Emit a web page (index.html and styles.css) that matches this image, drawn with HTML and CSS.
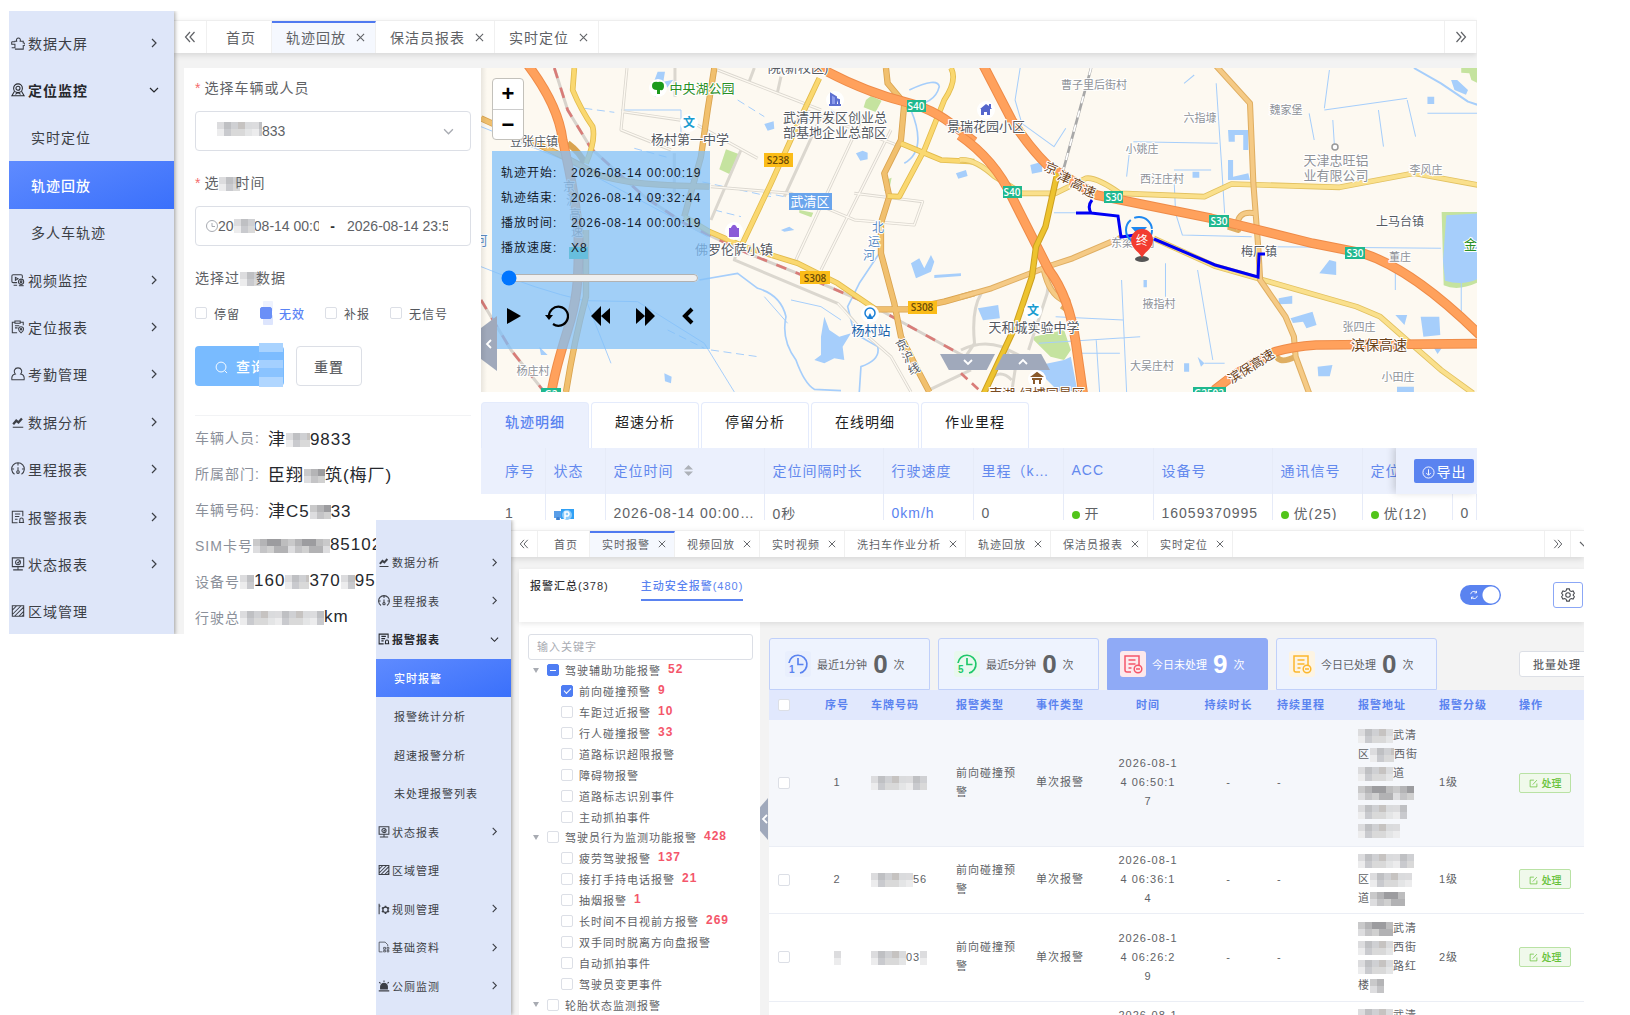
FILE: index.html
```html
<!DOCTYPE html>
<html lang="zh-CN">
<head>
<meta charset="utf-8">
<meta name="viewport" content="width=device-width, initial-scale=1">
<title>车辆监控平台</title>
<link rel="stylesheet" href="styles.css">
</head>
<body>
<svg class="sprite" aria-hidden="true">
  <symbol id="i-right" viewBox="0 0 10 10"><path d="M3 1l4 4-4 4" fill="none" stroke="currentColor" stroke-width="1.2"/></symbol>
  <symbol id="i-left" viewBox="0 0 10 10"><path d="M7 1L3 5l4 4" fill="none" stroke="currentColor" stroke-width="1.8"/></symbol>
  <symbol id="i-down" viewBox="0 0 10 10"><path d="M1 3l4 4 4-4" fill="none" stroke="currentColor" stroke-width="1.2"/></symbol>
  <symbol id="i-close" viewBox="0 0 10 10"><path d="M1 1l8 8M9 1L1 9" fill="none" stroke="currentColor" stroke-width="1.2"/></symbol>
  <symbol id="i-prev" viewBox="0 0 12 12"><path d="M6 1L1.500 6 6 11M10.500 1L6 6l4.500 5" fill="none" stroke="currentColor" stroke-width="1.200"/></symbol>
  <symbol id="i-next" viewBox="0 0 12 12"><path d="M6 1l4.500 5L6 11M1.500 1L6 6l-4.500 5" fill="none" stroke="currentColor" stroke-width="1.200"/></symbol>
  <symbol id="i-screen" viewBox="0 0 16 16"><path d="M.8 6.500h4M.8 6.500v3h3.700v4H.8M4.500 15h9.500v-4c3 .5 3-3.500 0-3V6h-3.500c1.500-5-5.500-5-4 0H4" fill="none" stroke="currentColor" stroke-width="1.200"/></symbol>
  <symbol id="i-locate" viewBox="0 0 16 16"><circle cx="8" cy="6" r="5"/><circle cx="8" cy="6" r="2.300"/><path d="M4 9.500L1 14.500h14L12 9.500M5 13l3-2 3 2"/></symbol>
  <symbol id="i-video" viewBox="0 0 16 16"><path d="M7 11H2.500A1.500 1.500 0 0 1 1 9.500v-6A1.500 1.500 0 0 1 2.500 2h9A1.500 1.500 0 0 1 13 3.500V6M3 14h4M5 5v3.500L8 6.700z"/><circle cx="11.500" cy="10" r="3"/><circle cx="11.500" cy="10" r="1"/><path d="M9 14.500h5.500"/></symbol>
  <symbol id="i-clip" viewBox="0 0 16 16"><path d="M7 14.500H1.500V2.500h3M10.500 2.500H14V6M4.500 1.200h6v2.600h-6zM4.500 6.500h5M4.500 9h3M11.500 14.800c-4-3-3.500-7 0-7s4 4 0 7z"/><circle cx="11.500" cy="10.500" r=".8"/></symbol>
  <symbol id="i-person" viewBox="0 0 16 16"><path d="M5 8C2.500 5 4 1 8 1s5.500 4 3 7c3.500.5 4.500 2.500 4 6.500H1C.5 10.500 1.500 8.500 5 8z"/></symbol>
  <symbol id="i-chart" viewBox="0 0 16 16"><path d="M2 14h12"/><path d="M2.500 10.500L6 6.500l2.500 2 4-4.500" stroke-width="2.600"/></symbol>
  <symbol id="i-gauge" viewBox="0 0 16 16"><path d="M4 14a7.200 7.200 0 1 1 8 0M8 1v3M1.500 8h2M14.500 8h-2M8 6v4"/><circle cx="8" cy="11.500" r="1.500"/></symbol>
  <symbol id="i-alarm" viewBox="0 0 16 16"><path d="M7.500 14.500H1.500v-13h12V7M4.500 4.500h6M4.500 7.500h5M4.500 10.500h3M10 14v-2.500c0-3 4-3 4 0V14M9 14.300h6"/></symbol>
  <symbol id="i-state" viewBox="0 0 16 16"><path d="M1.500 1h13v10h-13zM8 11v3.500M2.500 14.700h11"/><circle cx="8" cy="6" r="2.800"/><path d="M7 6l1 1 2-2.500"/></symbol>
  <symbol id="i-region" viewBox="0 0 16 16"><path d="M1.500 2h13v12h-13zM1.500 7l5-5M1.500 12l10-10M4 14L14.500 3.500M9 14l5.500-5.500M12.500 14l2-2"/></symbol>
  <symbol id="i-rule" viewBox="0 0 16 16"><path d="M1.500 1v14M1.500 4h1.800"/><circle cx="10" cy="9" r="3.500" stroke-width="1.800"/><path d="M10 3.500v2M10 12.500v2M5.200 6.200l1.800 1M13 10.800l1.800 1M5.200 11.800l1.800-1M13 7.200l1.800-1" stroke-width="2.200"/></symbol>
  <symbol id="i-base" viewBox="0 0 16 16"><path d="M6 14.500H1.500v-13h8L13 5v2M7.500 8.500h2.500V11H7.500zM12 8.500h2.500V11H12zM7.500 12.500h2.500v2H7.500zM12 12.500h2.500v2H12z" stroke-width="1"/></symbol>
  <symbol id="i-siren" viewBox="0 0 16 16"><path d="M3.500 12V9c0-6 9-6 9 0v3z" fill="currentColor"/><path d="M1 14.500h14M8 .5v2M1.500 3l2 1.500M14.500 3l-2 1.500"/></symbol>
  <symbol id="i-edit" viewBox="0 0 12 12"><path d="M6.500 1.500H1.500v9h9V6M5 7.500L10.500 1.500" fill="none" stroke="currentColor"/></symbol>
  <symbol id="i-list" viewBox="0 0 26 26"><path d="M11 21H7a2 2 0 0 1-2-2V5h14v9M8.500 9h7M8.500 13h7M8.500 17h3" fill="none" stroke="currentColor" stroke-width="1.500"/><circle cx="18" cy="18" r="3.800" fill="none" stroke="currentColor" stroke-width="1.500"/><path d="M16 18h4" stroke="currentColor" stroke-width="1.300"/></symbol>
  <symbol id="i-clock" viewBox="0 0 26 26"><path d="M4 12a9 9 0 1 1 11 10" fill="none" stroke="currentColor" stroke-width="1.700"/><path d="M13 7v6.500h5.500" fill="none" stroke="currentColor" stroke-width="1.700"/></symbol>
</svg>

<main class="desktop">
  <section class="window window-track">
    <nav class="sidebar" aria-label="主菜单">
      <a href="#"><svg class="ico"><use href="#i-screen"/></svg>数据大屏<svg class="arrow"><use href="#i-right"/></svg></a>
      <a href="#" class="open"><svg class="ico"><use href="#i-locate"/></svg>定位监控<svg class="arrow"><use href="#i-down"/></svg></a>
      <a href="#" class="sub">实时定位</a>
      <a href="#" class="sub active">轨迹回放</a>
      <a href="#" class="sub">多人车轨迹</a>
      <a href="#"><svg class="ico"><use href="#i-video"/></svg>视频监控<svg class="arrow"><use href="#i-right"/></svg></a>
      <a href="#"><svg class="ico"><use href="#i-clip"/></svg>定位报表<svg class="arrow"><use href="#i-right"/></svg></a>
      <a href="#"><svg class="ico"><use href="#i-person"/></svg>考勤管理<svg class="arrow"><use href="#i-right"/></svg></a>
      <a href="#"><svg class="ico"><use href="#i-chart"/></svg>数据分析<svg class="arrow"><use href="#i-right"/></svg></a>
      <a href="#"><svg class="ico"><use href="#i-gauge"/></svg>里程报表<svg class="arrow"><use href="#i-right"/></svg></a>
      <a href="#"><svg class="ico"><use href="#i-alarm"/></svg>报警报表<svg class="arrow"><use href="#i-right"/></svg></a>
      <a href="#"><svg class="ico"><use href="#i-state"/></svg>状态报表<svg class="arrow"><use href="#i-right"/></svg></a>
      <a href="#"><svg class="ico"><use href="#i-region"/></svg>区域管理</a>
    </nav>
    <div class="content">
      <header class="tabbar">
        <button class="nav-btn" aria-label="向左"><svg><use href="#i-prev"/></svg></button>
        <a href="#" class="tab home">首页</a>
        <a href="#" class="tab active">轨迹回放<svg><use href="#i-close"/></svg></a>
        <a href="#" class="tab">保洁员报表<svg><use href="#i-close"/></svg></a>
        <a href="#" class="tab">实时定位<svg><use href="#i-close"/></svg></a>
        <button class="nav-btn last" aria-label="向右"><svg><use href="#i-next"/></svg></button>
      </header>
      <div class="track-body">
        <form class="query">
          <label class="field-label required" for="vehicle">选择车辆或人员</label>
          <div class="box">
            <select id="vehicle"><option>833</option></select>
            <i class="mosaic m-select"></i>
            <svg class="caret"><use href="#i-down"/></svg>
          </div>
          <label class="field-label required" for="from">选<i class="mosaic m-char"></i>时间</label>
          <div class="box range">
            <svg class="clock" viewBox="0 0 12 12"><circle cx="6" cy="6" r="5.500"/><path d="M6 3v3.500h3"/></svg>
            <input id="from" type="text" value="2026-08-14 00:00:00">
            <i class="mosaic m-date"></i>
            <span>-</span>
            <input type="text" aria-label="结束时间" value="2026-08-14 23:5">
          </div>
          <div class="field-label">选择过<i class="mosaic m-char"></i>数据</div>
          <div class="checks">
            <label><input type="checkbox">停留</label>
            <label class="on"><input type="checkbox" checked>无效</label>
            <label><input type="checkbox">补报</label>
            <label><input type="checkbox">无信号</label>
          </div>
          <div class="actions">
            <button type="button" class="primary"><svg viewBox="0 0 14 14"><circle cx="6.500" cy="6.500" r="5.300"/><path d="M10.500 10.500l2.500 2.500"/></svg>查询<i class="mosaic m-blue"></i></button>
            <button type="button" class="plain">重置</button>
          </div>
          <dl class="info">
            <div><dt>车辆人员:</dt><dd>津<i class="mosaic w24"></i>9833</dd></div>
            <div><dt>所属部门:</dt><dd>臣翔<i class="mosaic w21 dark"></i>筑(梅厂)</dd></div>
            <div><dt>车辆号码:</dt><dd>津C5<i class="mosaic w21 dark"></i>33</dd></div>
            <div><dt>SIM卡号</dt><dd><i class="mosaic w77 dark"></i>85102</dd></div>
            <div><dt>设备号</dt><dd><i class="mosaic w14"></i>160<i class="mosaic w24"></i>370<i class="mosaic w14"></i>95</dd></div>
            <div><dt>行驶总</dt><dd><i class="mosaic w84"></i>km</dd></div>
          </dl>
        </form>

        <div class="track-main">
          <div class="map">
            <svg class="map-art" viewBox="480 68 997 324" preserveAspectRatio="xMinYMin slice" role="img" aria-label="武清区地图">
              <rect x="480" y="68" width="1600" height="324" fill="#fdf9f1"/>
              <g transform="translate(470 50) scale(.3333)" fill="none" stroke-linejoin="round">
                <g fill="#a6cefb">
                  <path d="M545 105l15-40 22 0-5 30 30-6-20 26-35 26zM880 222l28-8 2 22-20 6zM1155 310l20-8 15 6v20l-22 4zM1050 860l10-60 15 40 30 20 35-10-25 40 5 40-30-5-30 15-30-10 20-15zM205 890l25 25-20 0zM580 970l22 10-2 20-18-6zM1455 370l30-10 5 18-28 8zM1320 640l25-15 15 30 20-40 10 20-10 30-45 20zM930 540l25-10 15 10-30 5zM1390 675l80-5v8l-80 6z"/>
                </g>
                <g fill="#c5e39f"><path d="M1185 150l15-12 32 14-18 34-36-14zM765 298l38 14-28 60-30-14zM985 480l42 8-6 14-36-14zM1250 388l12-5-8 40-14 0z"/></g>
                <g stroke="#a6cefb" stroke-width="5">
                  <path d="M685 690L800 670 860 715Q930 735 945 800Q930 870 975 930Q1000 1000 1030 1018L1110 1022"/>
                  <path d="M1225 610L1165 700 1130 770 1150 850 1220 890Q1230 930 1170 950L1165 1026M1315 120Q1400 80 1405 110Q1390 170 1300 165M1320 180Q1370 300 1300 340"/>
                  <path d="M30 230L280 330 600 500 710 560M30 650Q200 720 340 752L500 755 700 880 790 1026M345 750L420 940M450 180h180v110M880 740l70 80M960 750l90 20 60 40" stroke-width="3"/>
                  <path d="M340 175l90 12M490 295l110 30M840 420l100 20M620 380l280 60M730 480l80 20M590 840l110 55M720 900l140 20M800 150l80 50M970 190l70 30M1080 180l30 20" stroke-width="3" stroke-dasharray="24 14"/>
                </g>
                <g stroke="#dbd7cf" stroke-width="9">
                  <path d="M468 54L450 240L600 300M455 185L660 215 860 325M612 54V140M610 310V430M740 60L1050 180M850 54l-15 40M930 80l-10 45M1000 180L1290 290M1180 190L970 640M1260 240L1050 660M810 300L720 510M720 410L960 430L1150 510 1330 525 1355 455 1150 430M800 600L790 630L1100 760L1120 780 1180 850 1260 920 1320 1026M1050 200L940 440M1375 1020L1500 960"/>
                </g>
                <g stroke="#fdf9f1" stroke-width="4">
                  <path d="M468 54L450 240L600 300M455 185L660 215 860 325M740 60L1050 180M1000 180L1290 290M1180 190L970 640M1260 240L1050 660M720 410L960 430L1150 510 1330 525 1355 455 1150 430M1100 760L1180 850 1260 920 1320 1026"/>
                </g>
                <g stroke="#d8d3cc" stroke-width="9"><path d="M250 54L290 180 360 295 520 440 640 520 830 610 980 670 1190 760 1500 930M30 750L120 900 220 1026"/></g>
                <path d="M250 54L290 180 360 295 520 440 640 520 830 610 980 670 1190 760 1500 930M30 750L120 900 220 1026" stroke="#d97c78" stroke-width="8" stroke-dasharray="32 30"/>
                <g stroke="#d9a34f" stroke-width="19">
                  <path d="M30 205C150 260 280 315 370 370C450 400 540 405 715 410M730 54L710 180 690 320 640 500M345 540L345 740Q310 870 285 1026M1245 54L1250 100 1300 160 1290 270 1240 370 1255 440 1230 520 1230 610 1270 760 1290 860 1340 960 1375 1026M1210 778L1310 778 1420 755 1510 730M290 280Q330 310 340 340"/>
                </g>
                <g stroke="#f1c06e" stroke-width="14">
                  <path d="M30 205C150 260 280 315 370 370C450 400 540 405 715 410M730 54L710 180 690 320 640 500M345 540L345 740Q310 870 285 1026M1245 54L1250 100 1300 160 1290 270 1240 370 1255 440 1230 520 1230 610 1270 760 1290 860 1340 960 1375 1026M1210 778L1310 778 1420 755 1510 730"/>
                </g>
                <g stroke="#e2bb4c" stroke-width="17">
                  <path d="M310 54L305 120Q330 180 365 230Q375 270 345 340M640 500L715 545 820 590 980 640 1100 700 1210 775M1045 85L1000 180 900 400 810 590M1440 54Q1460 90 1420 150L1360 300 1285 440 1250 438M1290 280L1410 330 1510 335"/>
                </g>
                <g stroke="#fad870" stroke-width="12">
                  <path d="M310 54L305 120Q330 180 365 230Q375 270 345 340M640 500L715 545 820 590 980 640 1100 700 1210 775M1045 85L1000 180 900 400 810 590M1440 54Q1460 90 1420 150L1360 300 1285 440 1250 438M1290 280L1410 330 1510 335"/>
                </g>
                <path d="M170 44C220 110 265 190 275 270C300 380 320 480 322 560C325 700 315 760 290 840C265 920 245 1000 240 1036M1030 44C1120 95 1200 130 1300 155C1400 180 1440 220 1510 275" stroke="#ee8b48" stroke-width="29"/>
                <path d="M170 44C220 110 265 190 275 270C300 380 320 480 322 560C325 700 315 760 290 840C265 920 245 1000 240 1036M1030 44C1120 95 1200 130 1300 155C1400 180 1440 220 1510 275" stroke="#ffa15c" stroke-width="23"/>
              </g>
              <g transform="translate(960 50) scale(.338 .3333)" fill="none" stroke-linejoin="round">
                <path d="M1422 486h110v210q-60 30-104 10zM1480 54h50v46l-20-10-6-20-24-2zM215 860l90-20 20 60-20 30-40-10-50-50z" fill="#c5e39f"/>
                <g fill="#a6cefb">
                  <path d="M1436 496l94-6v196q-45 22-98 6l-6-60zM235 945l70-15 20-10 20 106H290L225 960zM790 240h60v60h-15v-45h-25v20h-18zM790 330h15v50l45-10 5 20h-65zM205 345l35-10v30l-30 6zM1450 90l18 0 32 30-6 14-34-14zM1380 140h20v22h-20zM1360 800h55l3 55-50 5zM1385 870l50 6-25 36zM1285 795h35l-8 30zM975 805l65-20 12 40-30 10-10-20-30 4zM1090 630l20 5 0 40-50-5zM940 745l40-8v24l-40 2zM1055 950l44-5-8 34-34 0zM1290 1010h50v16h-50zM685 365h20v18h-20zM50 775l60-10 5 40-50 6zM540 690h10v22h-10zM660 940h15v25h-15zM700 920l20 20-10 10z"/>
                </g>
                <g stroke="#a6cefb" stroke-width="3">
                  <path d="M1340 54L1420 100 1500 155 1530 165" stroke-width="6"/>
                  <path d="M175 54L160 150 180 220 275 290 310 235M510 275L760 280M500 290L490 380M755 100L770 330 780 490M630 380L635 490 655 555 860 560M920 590L1420 595M275 488H340M1100 210L1105 290M1075 180L1320 145M1320 150L1345 260M1235 180L1250 290M1030 190L1045 270M605 640V740M700 660L745 930M475 690L490 1026M280 800L480 810M230 880L530 860M660 100L690 75M1090 60L1075 175M1285 600V720M1480 650V790M630 360h110M350 910h120M400 870L410 1026M720 940h60M1380 190h150"/>
                </g>
                <g stroke="#dbd7cf" stroke-width="9"><path d="M0 900Q60 870 120 890L200 930M60 730Q30 780 40 880L0 940M265 660L255 730 200 900M130 890L160 960 150 1026M80 1000Q110 950 150 990"/></g>
                <path d="M385 54L300 370 260 440" stroke="#a8a8a8" stroke-width="8"/>
                <path d="M385 54L300 370" stroke="#fff" stroke-width="5" stroke-dasharray="22 22"/>
                <path d="M0 970L60 1026" stroke="#d97c78" stroke-width="8" stroke-dasharray="26 18"/>
                <path d="M-4 330Q40 325 100 380L180 430 280 430 370 385Q400 380 470 430L720 440 800 402 1120 412 1340 370 1535 406M570 565L750 648 880 686 1170 770 1240 800 1330 880 1420 960 1515 1030" stroke="#e2c160" stroke-width="17"/>
                <path d="M-4 330Q40 325 100 380L180 430 280 430 370 385Q400 380 470 430L720 440 800 402 1120 412 1340 370 1535 406M570 565L750 648 880 686 1170 770 1240 800 1330 880 1420 960 1515 1030" stroke="#fae08c" stroke-width="12"/>
                <path d="M-4 742L90 715 270 645 330 625 480 560M755 48L855 160 865 400 880 600 885 690 960 800 985 860 990 920 1030 1030M870 490Q810 480 820 540L790 530M245 660Q260 730 300 750Q330 740 300 780M990 920Q930 950 930 900" stroke="#dfae62" stroke-width="18"/>
                <path d="M-4 742L90 715 270 645 330 625 480 560M755 48L855 160 865 400 880 600 885 690 960 800 985 860 990 920 1030 1030M870 490Q810 480 820 540M245 660Q260 730 300 750" stroke="#f5ca85" stroke-width="12"/>
                <path d="M65 44L150 210Q200 290 260 350L400 435 740 505 1040 580 1190 610Q1340 660 1535 855M-4 256Q100 330 150 440L260 660Q320 740 340 880L362 1036M1535 881L1050 885Q980 890 930 905Q820 960 750 1020" stroke="#ee8b48" stroke-width="29"/>
                <path d="M65 44L150 210Q200 290 260 350L400 435 740 505 1040 580 1190 610Q1340 660 1535 855M-4 256Q100 330 150 440L260 660Q320 740 340 880L362 1036M1535 881L1050 885Q980 890 930 905Q820 960 750 1020" stroke="#ffa15c" stroke-width="23"/>
                <path d="M285 370L250 530 222 590 210 680 160 830 65 1036" stroke="#cda021" stroke-width="19"/>
                <path d="M285 370L250 530 222 590 210 680 160 830 65 1036" stroke="#edc32f" stroke-width="13"/>
              </g>
              <g class="lbl" text-anchor="middle">
                <g class="poi">
                  <circle cx="657" cy="88" r="9"/><circle cx="688" cy="123" r="9"/><circle cx="834" cy="100" r="9"/><circle cx="733" cy="231" r="9"/><circle cx="869" cy="314" r="9"/><circle cx="985" cy="110" r="9"/><circle cx="1032" cy="311" r="9"/><circle cx="1036" cy="379" r="9"/>
                </g>
                <path d="M651 86q0-5 6-4 6-1 6 4t-4 4l0 4h-3v-4q-5 0-5-4z" fill="#1c9a1c"/>
                <text x="688" y="127" class="school">文</text><text x="1032" y="315" class="school">文</text>
                <path d="M830 105V94l5 3v8M835 99l3 1v5M828 105h12" stroke="#5d6fd0" stroke-width="2" fill="#8c9bea"/>
                <path d="M728 228h10v9h-10zM730.500 228q2.500-6 5 0" fill="#8a5bd8"/><path d="M730.500 228q2.500-5 5 0" fill="none" stroke="#8a5bd8" stroke-width="1.500"/>
                <path d="M979 109l6-5 3 2v-2h2v4l1 1h-2v6h-3v-3h-3v3h-3v-6z" fill="#5566cc"/>
                <circle cx="869" cy="313" r="5" fill="none" stroke="#1a7fd6" stroke-width="1.500"/><path d="M866 319l3-6 3 6z" fill="#1a7fd6"/>
                <path d="M1031 379h10M1032 376l4-3 4 3zM1033 379v5M1039 379v5" stroke="#8a5a2b" stroke-width="2"/>
                <circle cx="1334" cy="147" r="3" fill="#fff" stroke="#999" stroke-width="1.500"/>
                <g class="t13">
                  <text x="701" y="93" class="green">中央湖公园</text>
                  <text x="689" y="144">杨村第一中学</text>
                  <text x="797" y="72">院(新校区)</text>
                  <text x="834" y="122">武清开发区创业总</text><text x="834" y="137">部基地企业总部区</text>
                  <text x="985" y="131">景瑞花园小区</text>
                  <text x="733" y="254">佛罗伦萨小镇</text>
                  <text x="1033" y="332">天和城实验中学</text>
                  <text x="870" y="335" class="blue">杨村站</text>
                  <text x="1335" y="165" class="gray">天津忠旺铝</text><text x="1335" y="180" class="gray">业有限公司</text>
                  <text x="1036" y="398" class="brown">南湖·绿博园景区</text>
                  <text x="1476" y="249" class="green">金泉</text>
                  <text x="480" y="245" class="blue2">河</text>
                </g>
                <g class="t12">
                  <text x="533" y="146">豆张庄镇</text><text x="1399" y="226">上马台镇</text><text x="1258" y="256">梅厂镇</text>
                  <text x="877" y="232" class="blue2">北</text><text x="873" y="246" class="blue2">运</text><text x="868" y="260" class="blue2">河</text>
                  <text x="568" y="191" opacity=".6">京</text><text x="571" y="205" opacity=".6">沪</text><text x="574" y="219" opacity=".6">高</text><text x="576" y="236" opacity=".6">速</text>
                  <text x="901" y="349" transform="rotate(-25 901 345)">京</text><text x="907" y="361" transform="rotate(-25 907 357)">沪</text><text x="913" y="373" transform="rotate(-25 913 369)">线</text>
                </g>
                <g class="t11 gray">
                  <text x="532" y="375">杨庄村</text><text x="1093" y="89">曹子里后街村</text><text x="1199" y="122">六指𡐓</text><text x="1285" y="114">魏家堡</text>
                  <text x="1141" y="153">小姚庄</text><text x="1161" y="183">西汪庄村</text><text x="1425" y="174">李风庄</text><text x="1399" y="261">董庄</text>
                  <text x="1132" y="247">东梁各村</text><text x="1158" y="308">掖指村</text><text x="1358" y="331">张四庄</text><text x="1151" y="370">大吴庄村</text><text x="1397" y="381">小田庄</text>
                </g>
                <g class="road">
                  <text x="1050" y="173" transform="rotate(22 1050 169)">京</text><text x="1063" y="182" transform="rotate(25 1063 178)">津</text><text x="1076" y="189" transform="rotate(26 1076 185)">高</text><text x="1088" y="196" transform="rotate(20 1088 192)">速</text>
                  <text x="1378" y="350" class="wide">滨保高速</text>
                  <text x="1250" y="371" transform="rotate(-32 1250 366)">滨保高速</text>
                </g>
                <g class="badges">
                  <rect x="763" y="153" width="29" height="14" class="yel"/><text x="777" y="164" class="dark">S238</text>
                  <rect x="799" y="271" width="30" height="13" class="yel"/><text x="814" y="282" class="dark">S308</text>
                  <rect x="907" y="301" width="29" height="13" class="yel"/><text x="921" y="311" class="dark">S308</text>
                  <rect x="906" y="100" width="19" height="12"/><text x="915" y="110">S40</text>
                  <rect x="1002" y="186" width="19" height="12"/><text x="1011" y="196">S40</text>
                  <rect x="1103" y="191" width="19" height="12"/><text x="1113" y="201">S30</text>
                  <rect x="1208" y="215" width="20" height="12"/><text x="1218" y="225">S30</text>
                  <rect x="1344" y="247" width="20" height="12"/><text x="1354" y="257">S30</text>
                  <rect x="540" y="388" width="20" height="12"/><text x="550" y="398">G2</text>
                  <rect x="1192" y="387" width="33" height="12"/><text x="1208" y="397">G2502</text>
                  <rect x="568" y="247" width="19" height="12"/>
                  <rect x="788" y="193" width="43" height="17" class="area"/><text x="809" y="206" class="district">武清区</text>
                </g>
              </g>
              <path d="M1075 213h15l27 3 3 21 14-2M1091 200q-5 6-1 13M1153 239l61 26 43 12 1-23h6" fill="none" stroke="#0000f5" stroke-width="3"/>
              <circle cx="1138" cy="230" r="13" fill="none" stroke="#1e88f0" stroke-width="2" stroke-dasharray="24 4"/>
              <path d="M1130 227h16l-8 9z" fill="#1e88f0"/>
              <ellipse cx="1141" cy="259" rx="7" ry="3" fill="#555"/>
              <path d="M1141 258c-2-6-11-9-11-18a11 11 0 0 1 22 0c0 9-9 12-11 18z" fill="#f23c30"/>
              <text x="1141" y="245" text-anchor="middle" fill="#fff" font-size="12">终</text>
            </svg>
            <div class="zoom"><button aria-label="放大">+</button><button aria-label="缩小">−</button></div>
            <div class="player">
              <dl>
                <div><dt>轨迹开始:</dt><dd>2026-08-14 00:00:19</dd></div>
                <div><dt>轨迹结束:</dt><dd>2026-08-14 09:32:44</dd></div>
                <div><dt>播放时间:</dt><dd>2026-08-14 00:00:19</dd></div>
                <div><dt>播放速度:</dt><dd>X8</dd></div>
              </dl>
              <input type="range" min="0" max="100" value="0" aria-label="播放进度">
              <div class="player-btns">
                <button aria-label="播放"><svg viewBox="0 0 24 24"><path d="M6 4l14 8-14 8z"/></svg></button>
                <button aria-label="重播"><svg viewBox="0 0 24 24"><path d="M4 13a9.500 9.500 0 1 1 4 7" fill="none" stroke="#000" stroke-width="2.200"/><path d="M0 11h8l-4 5z"/></svg></button>
                <button aria-label="后退"><svg viewBox="0 0 24 24"><path d="M12 2v20L2 12zM21 4v16l-9-8z"/></svg></button>
                <button aria-label="前进"><svg viewBox="0 0 24 24"><path d="M12 2v20l10-10zM3 4v16l9-8z"/></svg></button>
                <button aria-label="收起"><svg viewBox="0 0 24 24"><path d="M15 5l-7 7 7 7" fill="none" stroke="#000" stroke-width="4"/></svg></button>
              </div>
            </div>
            <button class="fold" aria-label="收起面板"><svg><use href="#i-left"/></svg></button>
            <div class="fold-v">
              <button aria-label="向下"><svg viewBox="0 0 10 10"><path d="M1 3l4 4 4-4"/></svg></button><button aria-label="向上"><svg viewBox="0 0 10 10"><path d="M1 7l4-4 4 4"/></svg></button>
            </div>
          </div>
          <div class="detail-tabs">
            <button class="active">轨迹明细</button><button>超速分析</button><button>停留分析</button><button>在线明细</button><button>作业里程</button>
          </div>
          <div class="detail">
            <table>
              <colgroup><col class="c1"><col class="c2"><col class="c3"><col class="c4"><col class="c5"><col class="c5"><col class="c5"><col class="c4"><col class="c5"><col class="c5"><col></colgroup>
              <thead><tr><th>序号</th><th>状态</th><th>定位时间<svg class="sort" viewBox="0 0 10 12"><path d="M0 5l5-5 5 5zM0 7l5 5 5-5z"/></svg></th><th>定位间隔时长</th><th>行驶速度</th><th>里程（k…</th><th>ACC</th><th>设备号</th><th>通讯信号</th><th>定位信号</th><th></th></tr></thead>
              <tbody><tr><td>1</td><td><svg class="truck" viewBox="0 0 20 12"><path d="M0 2h7v7H0z" fill="#5a9ee8"/><path d="M7 0h13v10H7z" fill="#2fa0f5"/><circle cx="13" cy="6" r="5" fill="#8dcbfa"/><circle cx="4" cy="10" r="2" fill="#3c7fd0"/><path d="M11 10V3h3q2 2 0 4h-3" fill="none" stroke="#fff" stroke-width="1.500"/></svg></td><td>2026-08-14 00:00…</td><td>0秒</td><td class="link">0km/h</td><td>0</td><td><i class="dot"></i>开</td><td>16059370995</td><td><i class="dot"></i>优(25)</td><td><i class="dot"></i>优(12)</td><td>0</td></tr></tbody>
            </table>
            <div class="export"><button><svg viewBox="0 0 14 14"><circle cx="7" cy="7" r="6"/><path d="M7 3.500v6M4.500 7.500L7 10l2.500-2.500"/></svg>导出</button></div>
          </div>
        </div>
      </div>
    </div>
  </section>

  <section class="window window-alarm">
    <nav class="sidebar" aria-label="报警菜单">
      <a href="#"><svg class="ico"><use href="#i-chart"/></svg>数据分析<svg class="arrow"><use href="#i-right"/></svg></a>
      <a href="#"><svg class="ico"><use href="#i-gauge"/></svg>里程报表<svg class="arrow"><use href="#i-right"/></svg></a>
      <a href="#" class="open"><svg class="ico"><use href="#i-alarm"/></svg>报警报表<svg class="arrow"><use href="#i-down"/></svg></a>
      <a href="#" class="sub active">实时报警</a>
      <a href="#" class="sub">报警统计分析</a>
      <a href="#" class="sub">超速报警分析</a>
      <a href="#" class="sub">未处理报警列表</a>
      <a href="#"><svg class="ico"><use href="#i-state"/></svg>状态报表<svg class="arrow"><use href="#i-right"/></svg></a>
      <a href="#"><svg class="ico"><use href="#i-region"/></svg>区域管理</a>
      <a href="#"><svg class="ico"><use href="#i-rule"/></svg>规则管理<svg class="arrow"><use href="#i-right"/></svg></a>
      <a href="#"><svg class="ico"><use href="#i-base"/></svg>基础资料<svg class="arrow"><use href="#i-right"/></svg></a>
      <a href="#"><svg class="ico"><use href="#i-siren"/></svg>公厕监测<svg class="arrow"><use href="#i-right"/></svg></a>
    </nav>
    <div class="content">
      <header class="tabbar">
        <button class="nav-btn" aria-label="向左"><svg><use href="#i-prev"/></svg></button>
        <a href="#" class="tab home">首页</a>
        <a href="#" class="tab active">实时报警<svg><use href="#i-close"/></svg></a>
        <a href="#" class="tab">视频回放<svg><use href="#i-close"/></svg></a>
        <a href="#" class="tab">实时视频<svg><use href="#i-close"/></svg></a>
        <a href="#" class="tab">洗扫车作业分析<svg><use href="#i-close"/></svg></a>
        <a href="#" class="tab">轨迹回放<svg><use href="#i-close"/></svg></a>
        <a href="#" class="tab">保洁员报表<svg><use href="#i-close"/></svg></a>
        <a href="#" class="tab">实时定位<svg><use href="#i-close"/></svg></a>
        <button class="nav-btn last" aria-label="向右"><svg><use href="#i-next"/></svg></button>
        <button class="nav-btn more" aria-label="更多"><svg><use href="#i-down"/></svg></button>
      </header>
      <div class="summary">
        <a href="#">报警汇总(378)</a>
        <a href="#" class="active">主动安全报警(480)</a>
        <button class="switch" role="switch" aria-checked="true" aria-label="自动刷新"><svg viewBox="0 0 12 12"><path d="M2 5a4 4 0 0 1 7-2M9 1v2.500H6.500M10 7a4 4 0 0 1-7 2M3 11V8.500h2.500"/></svg></button>
        <button class="gear" aria-label="设置"><svg viewBox="0 0 16 16"><path d="M6.500 1h3l.6 2 1.600.9 2.100-.5 1.500 2.600L13.800 8l1.500 2-1.500 2.600-2.100-.5-1.600.9-.6 2h-3l-.6-2-1.600-.9-2.100.5L.7 10 2.200 8 .7 6l1.500-2.600 2.100.5L5.900 3z"/><circle cx="8" cy="8" r="2.600"/></svg></button>
      </div>
      <div class="alarm-body">
        <aside class="tree">
          <input type="text" placeholder="输入关键字" aria-label="输入关键字">
          <ul>
            <li class="parent"><i class="tri"></i><label><input type="checkbox" class="half">驾驶辅助功能报警<b>52</b></label></li>
            <li><label><input type="checkbox" checked>前向碰撞预警<b>9</b></label></li>
            <li><label><input type="checkbox">车距过近报警<b>10</b></label></li>
            <li><label><input type="checkbox">行人碰撞报警<b>33</b></label></li>
            <li><label><input type="checkbox">道路标识超限报警</label></li>
            <li><label><input type="checkbox">障碍物报警</label></li>
            <li><label><input type="checkbox">道路标志识别事件</label></li>
            <li><label><input type="checkbox">主动抓拍事件</label></li>
            <li class="parent"><i class="tri"></i><label><input type="checkbox">驾驶员行为监测功能报警<b>428</b></label></li>
            <li><label><input type="checkbox">疲劳驾驶报警<b>137</b></label></li>
            <li><label><input type="checkbox">接打手持电话报警<b>21</b></label></li>
            <li><label><input type="checkbox">抽烟报警<b>1</b></label></li>
            <li><label><input type="checkbox">长时间不目视前方报警<b>269</b></label></li>
            <li><label><input type="checkbox">双手同时脱离方向盘报警</label></li>
            <li><label><input type="checkbox">自动抓拍事件</label></li>
            <li><label><input type="checkbox">驾驶员变更事件</label></li>
            <li class="parent"><i class="tri"></i><label><input type="checkbox">轮胎状态监测报警</label></li>
          </ul>
        </aside>
        <button class="fold" aria-label="收起面板"><svg><use href="#i-left"/></svg></button>
        <div class="alarm-main">
          <div class="cards">
            <button class="card c-blue"><svg><use href="#i-clock"/><text x="4" y="22">1</text></svg><span>最近1分钟</span><strong>0</strong><span>次</span></button>
            <button class="card c-green"><svg><use href="#i-clock"/><text x="4" y="22">5</text></svg><span>最近5分钟</span><strong>0</strong><span>次</span></button>
            <button class="card c-red"><svg><use href="#i-list"/></svg><span>今日未处理</span><strong>9</strong><span>次</span></button>
            <button class="card c-amber"><svg><use href="#i-list"/></svg><span>今日已处理</span><strong>0</strong><span>次</span></button>
            <button class="batch">批量处理</button>
          </div>
          <table class="alarms">
            <colgroup><col class="a1"><col class="a2"><col class="a3"><col class="a4"><col class="a4"><col class="a4"><col class="a5"><col class="a5"><col class="a5"><col class="a4"><col></colgroup>
            <thead><tr><th><input type="checkbox" aria-label="全选"></th><th class="mid">序号</th><th>车牌号码</th><th>报警类型</th><th>事件类型</th><th class="mid">时间</th><th class="mid">持续时长</th><th>持续里程</th><th>报警地址</th><th>报警分级</th><th>操作</th></tr></thead>
            <tbody>
              <tr class="r1"><td><input type="checkbox" aria-label="选择第1行"></td><td class="mid">1</td><td><i class="mosaic w56"></i></td><td>前向碰撞预警</td><td>单次报警</td><td class="mid">2026-08-1<br>4 06:50:1<br>7</td><td class="mid">-</td><td>-</td><td class="addr"><i class="mosaic w35"></i>武清<br>区<i class="mosaic w24"></i>西街<br><i class="mosaic w35"></i>道<br><i class="mosaic w56 dark"></i><br><i class="mosaic w49"></i><br><i class="mosaic w42"></i></td><td>1级</td><td><button class="handle"><svg><use href="#i-edit"/></svg>处理</button></td></tr>
              <tr class="r2"><td><input type="checkbox" aria-label="选择第2行"></td><td class="mid">2</td><td><i class="mosaic w42"></i>56</td><td>前向碰撞预警</td><td>单次报警</td><td class="mid">2026-08-1<br>4 06:36:1<br>4</td><td class="mid">-</td><td>-</td><td class="addr"><i class="mosaic w56"></i><br>区<i class="mosaic w42"></i><br>道<i class="mosaic w35 dark"></i></td><td>1级</td><td><button class="handle"><svg><use href="#i-edit"/></svg>处理</button></td></tr>
              <tr class="r3"><td><input type="checkbox" aria-label="选择第3行"></td><td class="mid"><i class="mosaic w7"></i></td><td><i class="mosaic w35"></i>03<i class="mosaic w7"></i></td><td>前向碰撞预警</td><td>单次报警</td><td class="mid">2026-08-1<br>4 06:26:2<br>9</td><td class="mid">-</td><td>-</td><td class="addr"><i class="mosaic w35 dark"></i>武清<br><i class="mosaic w35"></i>西街<br><i class="mosaic w35"></i>路红<br>楼<i class="mosaic w14 dark"></i></td><td>2级</td><td><button class="handle"><svg><use href="#i-edit"/></svg>处理</button></td></tr>
              <tr class="r4"><td></td><td></td><td></td><td></td><td></td><td class="mid">2026-08-1</td><td></td><td></td><td class="addr"><i class="mosaic w35"></i>武清</td><td></td><td></td></tr>
            </tbody>
          </table>
        </div>
      </div>
    </div>
  </section>
</main>
</body>
</html>
```
FILE: styles.css
```css
* { box-sizing: border-box; }
body {
  margin: 0;
  background: #fff;
  color: #606266;
  font-family: "Liberation Sans", "Noto Sans CJK SC", sans-serif;
}
button, input, select { font-family: inherit; margin: 0; }
button { padding: 0; border: 0; background: none; color: inherit; letter-spacing: inherit; cursor: pointer; }
a { color: inherit; text-decoration: none; }
dl, dd, ul { margin: 0; padding: 0; }
.sprite { position: absolute; width: 0; height: 0; }

.desktop { position: relative; height: 100vh; min-height: 640px; overflow: hidden; padding: 11px 9px; }
.window { display: flex; background: #fff; overflow: hidden; letter-spacing: 1px; }
.window-track { margin-right: 144px; height: 623px; font-size: 14px; }
.window-alarm { position: absolute; top: 520px; left: 376px; right: 46px; bottom: 0; font-size: 11px; }
.content { flex: 1; min-width: 0; display: flex; flex-direction: column; background: linear-gradient(#fff 10px, #f3f3f3 10px); }

/* sidebar */
.sidebar {
  position: relative;
  z-index: 2;
  flex: none;
  display: grid;
  grid-auto-rows: 1fr;
  background: #dee6f9;
  box-shadow: 1px 0 4px rgba(0, 0, 0, .35);
  color: #3c3f46;
}
.window-track .sidebar { width: 165px; height: 624px; padding-top: 8px; }
.window-alarm .sidebar { width: 135px; padding: 23px 0 10px; }
.sidebar a { display: flex; align-items: center; gap: 3px; padding: 0 15px 0 2px; }
.sidebar .ico { width: 14px; height: 14px; fill: none; stroke: currentColor; stroke-width: 1.2; }
.sidebar .arrow { width: 10px; height: 10px; margin-left: auto; }
.sidebar .open { font-weight: bold; color: #26282d; }
.sidebar .sub { padding-left: 22px; }
.sidebar .active { background: linear-gradient(160deg, #5f8bff, #3a70fb); color: #fff; font-weight: 500; }
.window-alarm .sidebar a { gap: 2px; padding-right: 12px; }
.window-alarm .sidebar .ico { width: 12px; height: 12px; stroke-width: 1.4; }
.window-alarm .sidebar .arrow { width: 9px; height: 9px; }
.window-alarm .sidebar .sub { padding-left: 18px; }

/* page tabs */
.tabbar { flex: none; display: flex; background: #fff; border-top: 1px solid #eee; box-shadow: 0 2px 6px rgba(0, 0, 0, .12); z-index: 1; }
.window-track .tabbar { height: 33px; margin-top: 9px; }
.window-alarm .tabbar { height: 27px; margin-top: 10px; }
.tab { display: flex; align-items: center; border-right: 1px solid #f0f0f0; padding: 0 10px 0 14px; white-space: nowrap; }
.tab svg { width: 9px; height: 9px; margin-left: 10px; }
.tab.home { padding: 0 0 0 19px; width: 65px; }
.tab.active { border-top: 2px solid #4f79f0; background: #f5f8fe; padding-bottom: 2px; }
.nav-btn { width: 33px; border-right: 1px solid #f0f0f0; display: grid; place-items: center; }
.nav-btn svg { width: 12px; height: 12px; }
.nav-btn.last { margin-left: auto; border-left: 1px solid #f0f0f0; }
.window-alarm .tab { padding-left: 12px; padding-right: 8px; }
.window-alarm .tab svg { width: 8px; height: 8px; margin-left: 8px; }
.window-alarm .tab.home { width: 52px; padding: 0 0 0 16px; }
.window-alarm .nav-btn { width: 27px; }
.window-alarm .nav-btn svg { width: 10px; height: 10px; }
.window-alarm .nav-btn.more { width: 13px; border: 0; justify-items: end; overflow: hidden; }
.window-alarm .nav-btn.more svg { margin-right: -5px; }

/* pixelated cover for private values */
.mosaic {
  display: inline-block;
  height: 14px;
  vertical-align: middle;
  background:
    repeating-linear-gradient(90deg, #dcdcde 0 7px, #bfc0c3 7px 14px, #cfd0d3 14px 21px, #c6c3c1 21px 28px, #dadbdd 28px 35px) 0 0 / 100% 7px no-repeat,
    repeating-linear-gradient(90deg, #ececed 0 7px, #c9cace 7px 14px, #d9d9d9 14px 28px, #e4e5e6 28px 35px) 0 7px / 100% 7px no-repeat;
}
.mosaic.dark {
  background:
    repeating-linear-gradient(90deg, #c9c9ca 0 7px, #b4b4b6 7px 14px, #9c9c9f 14px 28px, #bdbdbe 28px 35px) 0 0 / 100% 7px no-repeat,
    repeating-linear-gradient(90deg, #dddddf 0 7px, #c4c4c6 7px 14px, #d0d0d0 14px 21px, #b2b2b4 21px 35px) 0 7px / 100% 7px no-repeat;
}
.w7 { width: 7px; } .w14 { width: 14px; } .w21 { width: 21px; } .w24 { width: 24px; } .w35 { width: 35px; }
.w42 { width: 42px; } .w49 { width: 49px; } .w56 { width: 56px; } .w77 { width: 77px; } .w84 { width: 84px; }
.m-char { width: 21px; margin-right: -5px; }

/* query form */
.track-body { flex: 1; display: flex; margin: 15px 0 0 10px; min-height: 0; }
.query { flex: none; width: 297px; padding: 0 10px 0 11px; background: #fff; }
.field-label { display: block; height: 40px; line-height: 40px; margin-bottom: 3px; }
.box + .field-label { margin-top: 12px; }
.required::before { content: "*"; color: #f56c6c; margin-right: 3px; }
.box { position: relative; height: 40px; border: 1px solid #dcdfe6; border-radius: 4px; display: flex; align-items: center; }
.box select { width: 100%; height: 38px; padding: 0 0 0 66px; border: 0; background: none; appearance: none; font-size: 14px; color: #606266; }
.box .caret { position: absolute; right: 16px; width: 11px; height: 11px; color: #a8abb2; }
.m-select { position: absolute; left: 21px; top: 10px; width: 45px; height: 18px; }
.m-date { position: absolute; left: 38px; top: 12px; width: 21px; height: 17px; }
.range input { width: 101px; border: 0; padding: 0; background: none; font-size: 14px; color: #606266; }
.range span { width: 28px; text-align: center; color: #303133; font-weight: bold; }
.range .clock { width: 12px; height: 12px; margin-left: 10px; fill: none; stroke: #a8abb2; overflow: visible; }
.checks { display: flex; align-items: center; height: 24px; font-size: 12px; color: #54575c; }
.checks label { display: flex; align-items: center; gap: 7px; width: 65px; white-space: nowrap; }
.checks .on { color: #5a83f5; font-weight: 500; }
input[type=checkbox] { appearance: none; flex: none; width: 12px; height: 12px; border: 1px solid #dcdfe6; border-radius: 2px; background: #fff; }
.checks .on input { background: #6a8ff7; border-color: #6a8ff7; box-shadow: 2px -7px 0 -1px #eef2fe, 2px 7px 0 -1px #dde5fd; }
.actions { display: flex; gap: 12px; margin-top: 21px; padding-bottom: 29px; border-bottom: 1px solid #f2f3f5; }
.actions button { position: relative; height: 40px; border-radius: 4px; font-size: 14px; font-weight: 500; }
.primary { width: 89px; background: #79bbff; color: #fff; text-align: left; padding-left: 20px; }
.primary svg { width: 13px; height: 13px; margin-right: 8px; vertical-align: -2px; fill: none; stroke: #fff; }
.m-blue { position: absolute; right: 1px; top: -3px; width: 24px; height: 44px; background: linear-gradient(#a9d3ff 9px, #7cbcff 9px 17px, #a4d0ff 17px 25px, #8ac3ff 25px 34px, #b0d6ff 34px); }
.plain { width: 66px; border: 1px solid #dcdfe6; }
.info { padding-top: 3px; }
.info div { display: flex; align-items: center; height: 36px; white-space: nowrap; }
.info dt { color: #8b909a; margin-right: 8px; }
.info dd { font-size: 17px; color: #26282d; }
.info div:nth-child(n+4) dt { margin-right: 0; }

/* map */
.track-main { flex: 1; min-width: 0; background: #fff; }
.map { position: relative; height: 324px; overflow: hidden; background: #fdf9f1; }
.map::before { content: ""; position: absolute; z-index: 1; inset: 0 auto 0 0; width: 6px; background: linear-gradient(90deg, rgba(0, 0, 0, .08), transparent); }
.map-art { display: block; width: 100%; height: 100%; letter-spacing: 0; }
.lbl { fill: #55595f; }
.lbl text { paint-order: stroke; stroke: #fff; stroke-width: 2px; }
.poi circle { fill: #fff; }
.lbl .t13 { font-size: 13px; } .lbl .t12 { font-size: 12px; } .lbl .t11 { font-size: 11px; }
.lbl .gray { fill: #8e9197; } .lbl .green { fill: #2a8f24; } .lbl .blue { fill: #1c62a8; } .lbl .blue2 { fill: #5b8cc4; } .lbl .brown { fill: #7a4a20; }
.lbl .school { font-size: 12px; fill: #1b9cd0; font-weight: bold; }
.road { font-size: 13px; fill: #6b4218; }
.road .wide { font-size: 14px; }
.badges { font-family: "Open Sans", sans-serif; font-size: 10px; font-weight: 600; fill: #fff; }
.badges rect { fill: #1fb88e; }
.badges .yel { fill: #fbbc18; }
.badges .area { fill: #6aa5ec; }
.badges text { stroke: none; }
.badges .dark { fill: #6a4b08; }
.badges .district { font-size: 13px; font-family: "Noto Sans CJK SC", sans-serif; font-weight: 400; }
.zoom { position: absolute; left: 11px; top: 10px; width: 32px; border: 1px solid #c3c1bb; border-radius: 4px; background: #fff; overflow: hidden; }
.zoom button { display: block; width: 30px; height: 30px; font: bold 22px/30px "Liberation Sans", sans-serif; letter-spacing: 0; color: #000; }
.zoom button + button { border-top: 1px solid #ccc; }
.player { position: absolute; left: 11px; top: 83px; width: 218px; height: 198px; padding: 10px 9px; background: rgba(128, 192, 248, .74); color: #15202b; font-size: 12px; white-space: nowrap; }
.player dl { height: 106px; }
.player dl div { display: flex; height: 25px; line-height: 25px; }
.player dt { flex: none; width: 70px; }
.player input { display: block; width: 198px; height: 16px; margin: 3px 0 0; }
.player-btns { display: flex; justify-content: space-between; margin-top: 18px; }
.player-btns svg { display: block; width: 24px; height: 24px; }
.fold { display: grid; place-items: center; background: #a0a9bb; color: #fff; clip-path: polygon(0 22%, 100% 0, 100% 100%, 0 78%); }
.fold svg { width: 10px; height: 10px; }
.map .fold { position: absolute; left: 0; top: 248px; width: 16px; height: 55px; }
.fold-v { position: absolute; left: 459px; top: 286px; display: flex; }
.fold-v button { width: 55px; height: 16px; background: #a0a9bb; clip-path: polygon(0 0, 100% 0, 85% 100%, 16% 100%); }
.fold-v button + button { clip-path: polygon(15% 0, 84% 0, 100% 100%, 0 100%); }
.fold-v svg { width: 10px; height: 10px; fill: none; stroke: #fff; stroke-width: 1.8; }

/* track detail */
.detail-tabs { display: flex; gap: 2px; padding-top: 10px; }
.detail-tabs button { width: 108px; height: 46px; padding-bottom: 9px; border: 1px solid #e4ebfc; border-bottom: 0; border-radius: 4px 4px 0 0; font-size: 14px; color: #1b1d21; }
.detail-tabs .active { background: #ebf0fd; color: #5a83f0; font-weight: 500; }
.detail { position: relative; overflow: hidden; }
table { width: 100%; border-collapse: collapse; table-layout: fixed; }
.detail th { height: 46px; background: #ebf0fd; color: #6389ee; font-weight: 400; }
.detail th, .detail td { text-align: left; padding: 0 0 3px 8px; white-space: nowrap; overflow: hidden; border-right: 1px solid #e6ebf8; }
.detail th:first-child, .detail td:first-child { padding-left: 24px; }
.detail td { height: 40px; font-size: 14px; }
.c1 { width: 64px; } .c2 { width: 60px; } .c3 { width: 159px; } .c4 { width: 119px; } .c5 { width: 90px; }
.sort { width: 9px; height: 11px; margin-left: 10px; fill: #adb1b8; }
.truck { width: 20px; height: 12px; vertical-align: -3px; }
.detail .link { color: #5a83f0; }
.dot { display: inline-block; width: 8px; height: 8px; margin-right: 5px; border-radius: 50%; background: #52c41a; }
.export { position: absolute; top: 0; right: 0; width: 81px; height: 46px; padding: 11px 3px 11px 18px; background: #ebf0fd; box-shadow: -2px -2px 8px rgba(0, 0, 0, .18); }
.export button { width: 60px; height: 24px; border-radius: 2px; background: #5a83f0; color: #fff; font-size: 14px; white-space: nowrap; }
.export svg { width: 13px; height: 13px; margin-right: 2px; vertical-align: -2px; fill: none; stroke: #fff; }

/* alarm window */
.summary { flex: none; display: flex; margin: 12px 0 0 8px; height: 53px; padding: 7px 1px 0 11px; gap: 32px; background: #fff; box-shadow: 0 2px 5px rgba(0, 0, 0, .09); z-index: 1; color: #303133; }
.summary a { height: 25px; line-height: 20px; font-weight: 500; }
.summary .active { color: #5a83f0; border-bottom: 2px solid #5a83f0; }
.switch { margin: 9px 20px 0 auto; width: 41px; height: 20px; border-radius: 10px; background: radial-gradient(circle at 31px 10px, #fff 8px, #5a83f0 9px); text-align: left; padding-left: 9px; }
.switch svg { width: 10px; height: 10px; fill: none; stroke: #fff; }
.gear { width: 30px; height: 26px; margin-top: 6px; border: 1px solid #8ba7f6; border-radius: 3px; color: #45484e; }
.gear svg { display: block; width: 14px; height: 14px; margin: auto; fill: none; stroke: currentColor; stroke-width: 1.2; }
.alarm-body { flex: 1; display: flex; min-height: 0; margin-left: 8px; background: #f3f3f3; }
.tree { flex: none; width: 241px; padding: 12px 8px 0; background: #fff; }
.tree > input { width: 225px; height: 26px; margin-left: 1px; padding: 0 8px; border: 1px solid #dcdfe6; border-radius: 3px; font-size: 11px; letter-spacing: 1px; }
.tree > input::placeholder { color: #a8abb2; }
.tree ul { display: grid; grid-auto-rows: 1fr; height: 355px; list-style: none; }
.tree li { display: flex; align-items: center; padding-left: 34px; white-space: nowrap; }
.tree .parent { padding-left: 6px; }
.tree label { display: flex; align-items: center; }
.tree label input { margin-right: 6px; }
.tree b { margin-left: 7px; margin-top: -2px; color: #f4566a; font-size: 12px; }
.tri { margin: 0 8px 0 0; border: 3px solid transparent; border-top: 5px solid #a8abb2; border-bottom: 0; }
.tree .half, .tree label input:checked { background: #4e7df3; border-color: #4e7df3; }
.half::after { content: ""; display: block; width: 6px; height: 1px; margin: 5px 2px; background: #fff; }
.tree input:checked::after { content: ""; display: block; width: 6px; height: 3px; margin: 2px; border: solid #fff; border-width: 0 0 1px 1px; transform: rotate(-45deg); }
.alarm-body > .fold { width: 8px; height: 42px; margin-top: 176px; }
.alarm-main { flex: 1; min-width: 0; padding: 16px 0 0 1px; overflow: hidden; }
.cards { display: flex; align-items: center; gap: 8px; height: 52px; }
.card { flex: none; display: flex; align-items: center; width: 161px; height: 52px; padding-left: 15px; border: 1px solid #c0d0fa; border-radius: 3px 3px 0 0; background: #eef3fe; color: #606266; font-size: 11px; letter-spacing: 0; }
.card svg { width: 26px; height: 26px; margin-right: 6px; border-radius: 3px; background: #e9effd; color: #5a83f0; }
.card text { font-size: 10px; font-weight: bold; fill: currentColor; }
.card strong { margin: 0 6px; font-size: 26px; line-height: 28px; }
.c-green svg { background: #e8f8ee; color: #1fc86a; }
.c-red { background: #8faaf6; color: #fff; border-color: #8faaf6; padding-left: 12px; }
.c-red svg { background: #fde9ec; color: #f4566a; }
.c-amber { padding-left: 12px; }
.c-amber svg { background: #fdf4e3; color: #fbb62c; }
.batch { flex: none; width: 76px; height: 26px; margin-left: auto; margin-right: -11px; border: 1px solid #dcdfe6; border-radius: 3px; background: #fff; font-size: 11px; font-weight: 500; }
.a1 { width: 42px; } .a2 { width: 52px; } .a3 { width: 85px; } .a4 { width: 80px; } .a5 { width: 81px; }
.alarms th { height: 30px; background: #e1e8fd; color: #5a83f0; font-weight: bold; }
.alarms th, .alarms td { padding: 0 8px; text-align: left; line-height: 19px; white-space: nowrap; }
.alarms td { border-bottom: 1px solid #ebeef5; background: #fff; }
.alarms td:nth-child(4) { white-space: normal; }
.alarms .mid { text-align: center; }
.alarms th:first-child, .alarms td:first-child { padding-left: 9px; }
.alarms td input, .alarms th input { display: block; }
.alarms .r1 td { height: 126px; background: #f5f7fb; }
.alarms .r2 td { height: 67px; }
.alarms .r3 td { height: 88px; }
.alarms .r4 td { height: 60px; padding-top: 4px; vertical-align: top; }
.handle { width: 52px; height: 20px; border: 1px solid #b9e2a4; border-radius: 2px; background: #f0f9eb; color: #67c23a; font-size: 10px; font-weight: 500; letter-spacing: 0; }
.handle svg { width: 9px; height: 9px; margin-right: 4px; vertical-align: -1px; }
```
